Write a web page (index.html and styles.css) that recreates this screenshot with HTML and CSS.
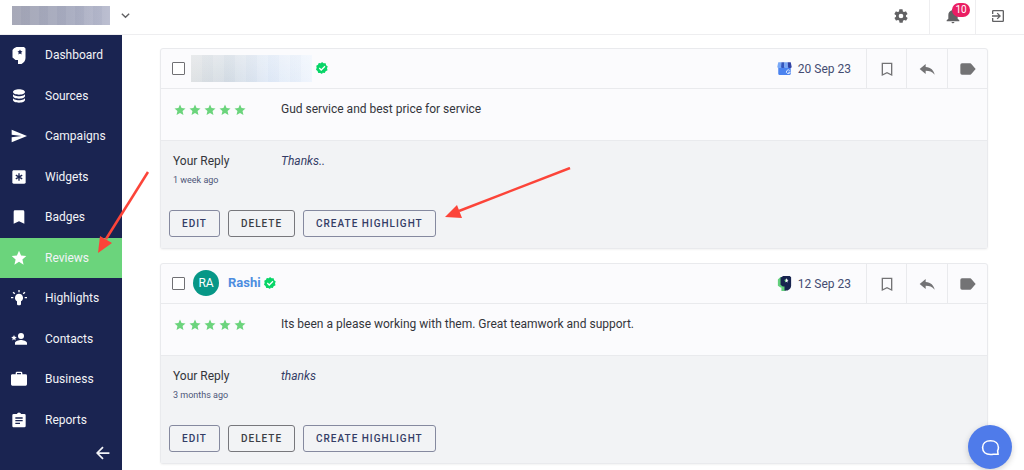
FILE: index.html
```html
<!DOCTYPE html>
<html lang="en">
<head>
<meta charset="utf-8">
<meta name="viewport" content="width=device-width, initial-scale=1">
<title>Reviews</title>
<link rel="stylesheet" href="styles.css">
</head>
<body>
<svg class="sprite" aria-hidden="true">
  <symbol id="quote" viewBox="0 0 13 17"><path fill-rule="evenodd" d="M4 0h7.500L13 1.500V11c0 2.500-1.500 4.500-4 6H5.500V13H3l-3-2.500V3l1.500-1.800zM7.500 2.500l-.8 1.600-1.700.3 1.200 1.200-.3 1.800 1.600-.9 1.600.9-.3-1.800L10 4.400l-1.700-.3z"/></symbol>
  <symbol id="database" viewBox="0 0 24 24"><path d="M12 2C7 2 3 3.800 3 6s4 4 9 4 9-1.800 9-4-4-4-9-4zM3 8.500V12c0 2.200 4 4 9 4s9-1.800 9-4V8.500c0 2.200-4 3.700-9 3.700s-9-1.500-9-3.700zM3 14.500V18c0 2.200 4 4 9 4s9-1.800 9-4v-3.500c0 2.200-4 3.700-9 3.700s-9-1.500-9-3.700z"/></symbol>
  <symbol id="send" viewBox="0 0 24 24"><path d="M1 2.500 24 12 1 21.500V14l15-2L1 10z"/></symbol>
  <symbol id="widget" viewBox="0 0 24 24"><path d="M4 2h16a2 2 0 0 1 2 2v16a2 2 0 0 1-2 2H4a2 2 0 0 1-2-2V4c0-1.100.9-2 2-2z"/><path class="cut" d="M12 6.500v11M7.200 9.200l9.600 5.600M16.800 9.200l-9.600 5.600"/></symbol>
  <symbol id="bookmark" viewBox="0 0 24 24"><path d="M18 2H6a2 2 0 0 0-2 2v18l8-3.500 8 3.500V4a2 2 0 0 0-2-2z"/></symbol>
  <symbol id="star" viewBox="0 0 24 24"><path d="M12 17.800 18.900 22l-1.800-7.900L23 8.900l-7.900-.7L12 1 8.900 8.200 1 8.900l5.900 5.200L5.100 22z"/></symbol>
  <symbol id="bulb" viewBox="0 0 24 24"><path d="M12 5.500a6 6 0 0 0-3 11.200V21c0 1 .6 1.700 1.500 1.700h3c.9 0 1.500-.7 1.500-1.700v-4.300A6 6 0 0 0 12 5.500zM11 0h2v3.500h-2zM0 10.500h3.500v2H0zM20.500 10.500H24v2h-3.500zM3.800 2.600 6.400 5 5 6.400 2.400 4zM20.200 2.600 17.600 5 19 6.400 21.600 4z"/></symbol>
  <symbol id="contact" viewBox="0 0 24 24"><circle cx="15" cy="7.500" r="4.500"/><path d="M6 20.500v-2.500c0-3 6-4.500 9-4.500s9 1.500 9 4.500v2.500zM4.500 6l1.200 2.800 3 .3-2.300 2 .7 3-2.600-1.600-2.600 1.600.7-3-2.300-2 3-.3z"/></symbol>
  <symbol id="briefcase" viewBox="0 0 24 24"><path fill-rule="evenodd" d="M9 1h6a2 2 0 0 1 2 2v2h5a2 2 0 0 1 2 2v13a2 2 0 0 1-2 2H2a2 2 0 0 1-2-2V7c0-1.100.9-2 2-2h5V3c0-1.100.9-2 2-2zm0 2v2h6V3z"/></symbol>
  <symbol id="clipboard" viewBox="0 0 24 24"><path d="M20 3h-4.900a3.200 3.200 0 0 0-6.200 0H4a2 2 0 0 0-2 2v16c0 1.100.9 2 2 2h16a2 2 0 0 0 2-2V5a2 2 0 0 0-2-2z"/><path class="cut" d="M6.500 9h11M6.500 13h11M6.500 17h7"/></symbol>
  <symbol id="arrow-left" viewBox="0 0 24 24"><path class="line heavy" d="M23 12H3M12 2 2 12l10 10"/></symbol>
  <symbol id="chevron" viewBox="0 0 24 24"><path class="line heavy" d="m4 8 8 8 8-8"/></symbol>
  <symbol id="gear" viewBox="0 0 24 24"><path d="M19.400 13c0-.3.100-.6.100-1s0-.7-.1-1l2.100-1.600c.2-.2.300-.4.100-.6l-2-3.500c-.1-.2-.4-.3-.6-.2l-2.500 1c-.5-.4-1.100-.7-1.700-1l-.4-2.600c0-.3-.2-.5-.5-.5h-4c-.2 0-.4.200-.5.400l-.4 2.700c-.6.200-1.100.6-1.700 1l-2.500-1c-.2-.1-.5 0-.6.200l-2 3.500c-.1.200 0 .5.100.6L4.600 11c0 .3-.1.700-.1 1s0 .7.100 1l-2.100 1.600c-.2.200-.3.400-.1.600l2 3.500c.1.200.4.300.6.200l2.500-1c.5.400 1.100.7 1.700 1l.4 2.600c0 .3.200.5.500.5h4c.2 0 .5-.2.500-.4l.4-2.700c.6-.2 1.100-.6 1.700-1l2.500 1c.2.100.5 0 .6-.2l2-3.500c.1-.2.100-.5-.1-.6zM12 15.500a3.500 3.500 0 1 1 0-7 3.500 3.500 0 0 1 0 7z"/></symbol>
  <symbol id="bell" viewBox="0 0 24 24"><path d="M12 23a2.200 2.200 0 0 0 2.200-2H9.800c0 1.100 1 2 2.200 2zm7-7V10.500c0-3.500-1.900-6.200-5.300-7V2.700a1.700 1.700 0 0 0-3.400 0v.8C7 4.300 5 7 5 10.500V16l-2.500 2.500V20h19v-1.500z"/></symbol>
  <symbol id="exit" viewBox="0 0 24 24"><path d="M10.100 15.600 11.500 17l5-5-5-5-1.400 1.400 2.600 2.600H3v2h9.700zM19 3H5a2 2 0 0 0-2 2v4h2V5h14v14H5v-4H3v4c0 1.100.9 2 2 2h14a2 2 0 0 0 2-2V5a2 2 0 0 0-2-2z"/></symbol>
  <symbol id="bookmark-line" viewBox="0 0 24 24"><path class="line" d="M5 3.500h14V21l-7-3.500L5 21z"/></symbol>
  <symbol id="reply" viewBox="0 0 24 24"><path d="M10 9V4.500L1 12l9 7.500v-4.700c5.500 0 9.800 1 13.500 5.700C22 14 18 9.500 10 9z"/></symbol>
  <symbol id="tag" viewBox="0 0 24 24"><path d="M17 4.500c-.4-.6-1-1-1.700-1H3a2.500 2.500 0 0 0-2.500 2.500v12A2.500 2.500 0 0 0 3 20.500h12.300c.7 0 1.300-.4 1.700-1l6.500-7.500z"/></symbol>
  <symbol id="verified" viewBox="0 0 24 24"><path fill="#07d567" d="m12 0 3.200 2.600 4.100-.1.900 4 3.300 2.400L22 12.500l1 4-3.700 1.900-1.800 3.600-4.100-.6L12 24l-3.500-2.200-4 .3-1.400-3.900L0 15.500l1.300-3.900L.5 7.600 4 5.700l1.500-3.800 4.200.4z"/><path fill="none" stroke="#fff" stroke-width="2.500" d="m6.500 12 4 4 7.500-7.500"/></symbol>
  <symbol id="store" viewBox="0 0 24 24"><path fill="#4b83ef" d="M2 10h20v10.500c0 1-.8 1.800-1.800 1.800H3.800c-1 0-1.800-.8-1.800-1.800z"/><path fill="#78a8f7" d="M2 2h5v7.500c0 2-6.500 2-6.500 0z"/><path fill="#3356bd" d="M7 2h5v7.500c0 2-5.500 2-5.500 0z"/><path fill="#78a8f7" d="M12 2h5l.5 7.500c0 2-5.500 2-5.500 0z"/><path fill="#3043a5" d="M17 2h5l1.500 7.500c0 2-6 2-6 0z"/><path fill="none" stroke="#e5efff" stroke-width="1.500" d="M20.300 15.200a3 3 0 1 0 .7 2.800h-3"/></symbol>
  <symbol id="chat" viewBox="0 0 24 24"><path class="line" d="M21.500 20.500h-6c-1 .3-2.200.4-3.500.4-6 0-10-3.600-10-8.900s4-8.500 10-8.500 10 3.200 10 8.500c0 1.600-.3 2.800-1 4z"/></symbol>
</svg>

<header class="topbar">
  <button class="account" aria-label="Switch account">
    <span class="account-name"></span>
    <svg class="chevron"><use href="#chevron"/></svg>
  </button>
  <div class="tools">
    <button class="tool settings" aria-label="Settings"><svg class="icon"><use href="#gear"/></svg></button>
    <button class="tool alerts" aria-label="Notifications"><svg class="icon"><use href="#bell"/></svg><span class="badge">10</span></button>
    <button class="tool exit" aria-label="Sign out"><svg class="icon"><use href="#exit"/></svg></button>
  </div>
</header>

<div class="shell">
  <aside class="sidebar">
    <nav class="nav">
      <a class="nav-link" href="#dashboard"><svg class="nav-icon tall"><use href="#quote"/></svg>Dashboard</a>
      <a class="nav-link" href="#sources"><svg class="nav-icon"><use href="#database"/></svg>Sources</a>
      <a class="nav-link" href="#campaigns"><svg class="nav-icon"><use href="#send"/></svg>Campaigns</a>
      <a class="nav-link" href="#widgets"><svg class="nav-icon"><use href="#widget"/></svg>Widgets</a>
      <a class="nav-link" href="#badges"><svg class="nav-icon"><use href="#bookmark"/></svg>Badges</a>
      <a class="nav-link current" href="#reviews" aria-current="page"><svg class="nav-icon"><use href="#star"/></svg>Reviews</a>
      <a class="nav-link" href="#highlights"><svg class="nav-icon"><use href="#bulb"/></svg>Highlights</a>
      <a class="nav-link" href="#contacts"><svg class="nav-icon"><use href="#contact"/></svg>Contacts</a>
      <a class="nav-link" href="#business"><svg class="nav-icon"><use href="#briefcase"/></svg>Business</a>
      <a class="nav-link" href="#reports"><svg class="nav-icon"><use href="#clipboard"/></svg>Reports</a>
    </nav>
    <button class="collapse" aria-label="Collapse menu"><svg class="collapse-icon"><use href="#arrow-left"/></svg></button>
  </aside>

  <main class="reviews">
    <article class="card">
      <div class="card-head">
        <div class="author">
          <input class="pick" type="checkbox" aria-label="Select review">
          <span class="hidden-name"></span>
          <svg class="verified"><use href="#verified"/></svg>
        </div>
        <div class="source"><svg class="source-icon"><use href="#store"/></svg><time datetime="2023-09-20">20 Sep 23</time></div>
        <button class="action" aria-label="Bookmark"><svg class="icon"><use href="#bookmark-line"/></svg></button>
        <button class="action" aria-label="Reply"><svg class="icon"><use href="#reply"/></svg></button>
        <button class="action" aria-label="Tag"><svg class="icon"><use href="#tag"/></svg></button>
      </div>
      <div class="card-body">
        <div class="stars" role="img" aria-label="5 out of 5 stars">
          <svg><use href="#star"/></svg><svg><use href="#star"/></svg><svg><use href="#star"/></svg><svg><use href="#star"/></svg><svg><use href="#star"/></svg>
        </div>
        <p class="text">Gud service and best price for service</p>
      </div>
      <div class="reply">
        <div class="reply-row">
          <div><p class="text">Your Reply</p><p class="age">1 week ago</p></div>
          <p class="text answer">Thanks..</p>
        </div>
        <div class="buttons">
          <button class="btn">EDIT</button><button class="btn dark">DELETE</button><button class="btn">CREATE HIGHLIGHT</button>
        </div>
      </div>
    </article>

    <article class="card">
      <div class="card-head">
        <div class="author">
          <input class="pick" type="checkbox" aria-label="Select review by Rashi">
          <span class="avatar">RA</span>
          <a class="name" href="#rashi">Rashi</a>
          <svg class="verified"><use href="#verified"/></svg>
        </div>
        <div class="source"><svg class="source-icon" viewBox="-2 0 15 17"><path fill="#62cf7c" d="M1 1h6v16H2v-4H1l-3-2V4z"/><path fill="#17234f" fill-rule="evenodd" d="M4 0h7.500L13 1.500V11c0 2.500-1.500 4-4 5.500H5.500V12H3.500L1 10V2zM7.500 2.500l-.8 1.600-1.700.3 1.200 1.200-.3 1.800 1.600-.9 1.600.9-.3-1.800L10 4.400l-1.700-.3z"/></svg><time datetime="2023-09-12">12 Sep 23</time></div>
        <button class="action" aria-label="Bookmark"><svg class="icon"><use href="#bookmark-line"/></svg></button>
        <button class="action" aria-label="Reply"><svg class="icon"><use href="#reply"/></svg></button>
        <button class="action" aria-label="Tag"><svg class="icon"><use href="#tag"/></svg></button>
      </div>
      <div class="card-body">
        <div class="stars" role="img" aria-label="5 out of 5 stars">
          <svg><use href="#star"/></svg><svg><use href="#star"/></svg><svg><use href="#star"/></svg><svg><use href="#star"/></svg><svg><use href="#star"/></svg>
        </div>
        <p class="text">Its been a please working with them. Great teamwork and support.</p>
      </div>
      <div class="reply">
        <div class="reply-row">
          <div><p class="text">Your Reply</p><p class="age">3 months ago</p></div>
          <p class="text answer">thanks</p>
        </div>
        <div class="buttons">
          <button class="btn">EDIT</button><button class="btn dark">DELETE</button><button class="btn">CREATE HIGHLIGHT</button>
        </div>
      </div>
    </article>
  </main>
</div>

<button class="chat" aria-label="Open chat"><svg class="chat-icon"><use href="#chat"/></svg></button>

<svg class="pointer to-menu" viewBox="0 0 52 84" aria-hidden="true"><path class="shaft" stroke-width="2.500" d="M50 2 8 69"/><path class="tip" d="M0 83 2 66l12 7z"/></svg>
<svg class="pointer to-button" viewBox="0 0 126 52" aria-hidden="true"><path class="shaft" stroke-width="2.500" d="m125 1-111 43"/><path class="tip" d="m0 50 12-12 5 13z"/></svg>
</body>
</html>
```
FILE: styles.css
```css
* { box-sizing: border-box; }

body {
  margin: 0;
  min-height: 100vh;
  display: flex;
  flex-direction: column;
  position: relative;
  background: #fff;
  color: #33353b;
  font: 12px/16px Roboto, "Liberation Sans", sans-serif;
}

p { margin: 0; }
a { color: inherit; text-decoration: none; }
svg { display: block; flex: none; fill: currentColor; }

button {
  margin: 0;
  padding: 0;
  border: 0;
  background: none;
  color: inherit;
  font: inherit;
  cursor: pointer;
}

.sprite { position: absolute; width: 0; height: 0; }
.line { fill: none; stroke: currentColor; stroke-width: 2; }
.line.heavy { stroke-width: 3; }
.cut { fill: none; stroke: #1a2451; stroke-width: 2; }
.icon { width: 16px; height: 16px; }

/* Top bar */
.topbar {
  height: 35px;
  display: flex;
  justify-content: space-between;
  border-bottom: 1px solid #eeeef0;
  color: #626264;
}

.account {
  display: flex;
  align-items: center;
  gap: 10px;
  padding: 0 0 4px 12px;
}

.account-name {
  width: 98px;
  height: 19px;
  background:
    repeating-linear-gradient(90deg, #ffffff0c 0 9px, #77809e0c 9px 18px),
    linear-gradient(90deg, #a3a5b5, #a7abbf 60%, #b9bccf);
}

.chevron { width: 11px; height: 11px; }
.chevron, .collapse-icon { overflow: visible; }

.tools { display: flex; }

.tool {
  width: 46px;
  display: flex;
  align-items: center;
  justify-content: center;
  padding-bottom: 3px;
  border-left: 1px solid #eeeef0;
}

.tool.settings { width: 56px; border-left: 0; }
.tool.exit { width: 49px; padding-right: 4px; }
.alerts { position: relative; }

.badge {
  position: absolute;
  top: 3px;
  left: 22px;
  min-width: 18px;
  padding: 0 3px;
  border-radius: 8px;
  background: #ea1e63;
  color: #fff;
  font-size: 10px;
  line-height: 14px;
}

/* Side menu */
.shell { flex: 1; display: flex; }

.sidebar {
  width: 122px;
  flex: none;
  display: flex;
  flex-direction: column;
  background: #1a2451;
  color: #f2f3f7;
}

.nav { flex: 1; display: flex; flex-direction: column; }

.nav-link {
  flex: 1;
  display: flex;
  align-items: center;
  gap: 18px;
  padding-left: 11px;
}

.nav-link.current { background: #6bd47c; }
.nav-icon { width: 16px; height: 16px; color: #fff; }
.nav-icon.tall { height: 17px; }

.collapse {
  height: 30px;
  display: flex;
  justify-content: flex-end;
  padding: 6px 12px 0 0;
}

.collapse-icon { width: 14px; height: 14px; }

/* Review cards */
.reviews {
  flex: 1;
  min-width: 0;
  display: flex;
  flex-direction: column;
  gap: 14px;
  padding: 13px 36px 6px 38px;
}

.card {
  border: 1px solid #e9eaed;
  border-radius: 3px;
  background: #fbfbfd;
  box-shadow: 0 1px 2px #0000000d;
}

.card-head {
  height: 40px;
  display: flex;
  border-bottom: 1px solid #e9eaed;
}

.author {
  flex: 1;
  display: flex;
  align-items: center;
  padding-left: 11px;
  padding-bottom: 1px;
}

.pick {
  appearance: none;
  width: 13px;
  height: 13px;
  margin: 0 6px 0 0;
  border: 1px solid #707074;
  border-radius: 1px;
  background: #fff;
}

.hidden-name {
  width: 121px;
  height: 27px;
  margin-right: 4px;
  background:
    repeating-linear-gradient(90deg, #ffffff18 0 11px, #c0cee010 11px 22px),
    linear-gradient(#ffffff50, #ffffff00),
    linear-gradient(90deg, #dcdfe1, #d3dbe3 30%, #dfe9f7 65%, #eef4fd);
}

.avatar {
  width: 26px;
  margin: 0 9px 0 2px;
  border-radius: 50%;
  background: #079787;
  color: #fff;
  line-height: 26px;
  text-align: center;
}

.name {
  margin-right: 3px;
  color: #4c8de0;
  font-size: 13px;
  font-weight: 700;
}

.verified { width: 12px; height: 12px; }

.source {
  display: flex;
  align-items: center;
  gap: 6px;
  padding-right: 15px;
  color: #444c72;
}

.source-icon { width: 15px; height: 15px; }

.action {
  width: 40px;
  display: flex;
  align-items: center;
  justify-content: center;
  border-left: 1px solid #e9eaed;
  color: #737375;
}

.action:nth-last-child(2) { width: 41px; }

.card-body, .reply-row {
  display: grid;
  grid-template-columns: 108px 1fr;
}

.card-body { padding: 12px 12px 23px; }

.stars {
  display: flex;
  gap: 3px;
  padding: 3px 0 0 1px;
  color: #6bd47c;
}

.stars svg { width: 12px; height: 12px; }

.reply {
  padding: 12px 8px 11px;
  border-top: 1px solid #e9eaed;
  background: #f2f3f5;
}

.reply-row { padding: 0 4px; }
.answer { color: #343c65; font-style: italic; }

.age {
  padding-top: 4px;
  color: #4d5578;
  font-size: 9px;
  line-height: 14px;
}

.buttons { display: flex; gap: 8px; padding-top: 23px; }

.btn {
  height: 27px;
  padding: 0 12px;
  border: 1px solid #85899f;
  border-radius: 3px;
  color: #343d66;
  font-size: 10px;
  font-weight: 500;
  letter-spacing: 1px;
}

.btn.dark { border-color: #77777c; color: #3c3e45; }

/* Overlays */
.chat {
  position: fixed;
  right: 12px;
  bottom: 1px;
  width: 44px;
  height: 44px;
  display: grid;
  place-items: center;
  border-radius: 50%;
  background: #4f7bea;
  box-shadow: 0 2px 6px #0000002e;
  color: #fff;
}

.chat-icon { width: 19px; height: 19px; }

.pointer { position: absolute; pointer-events: none; }
.to-menu { left: 98px; top: 170px; width: 52px; height: 84px; }
.to-button { left: 445px; top: 167px; width: 126px; height: 52px; }
.shaft { fill: none; stroke: #fc4439; }
.tip { fill: #fc4439; }
```
